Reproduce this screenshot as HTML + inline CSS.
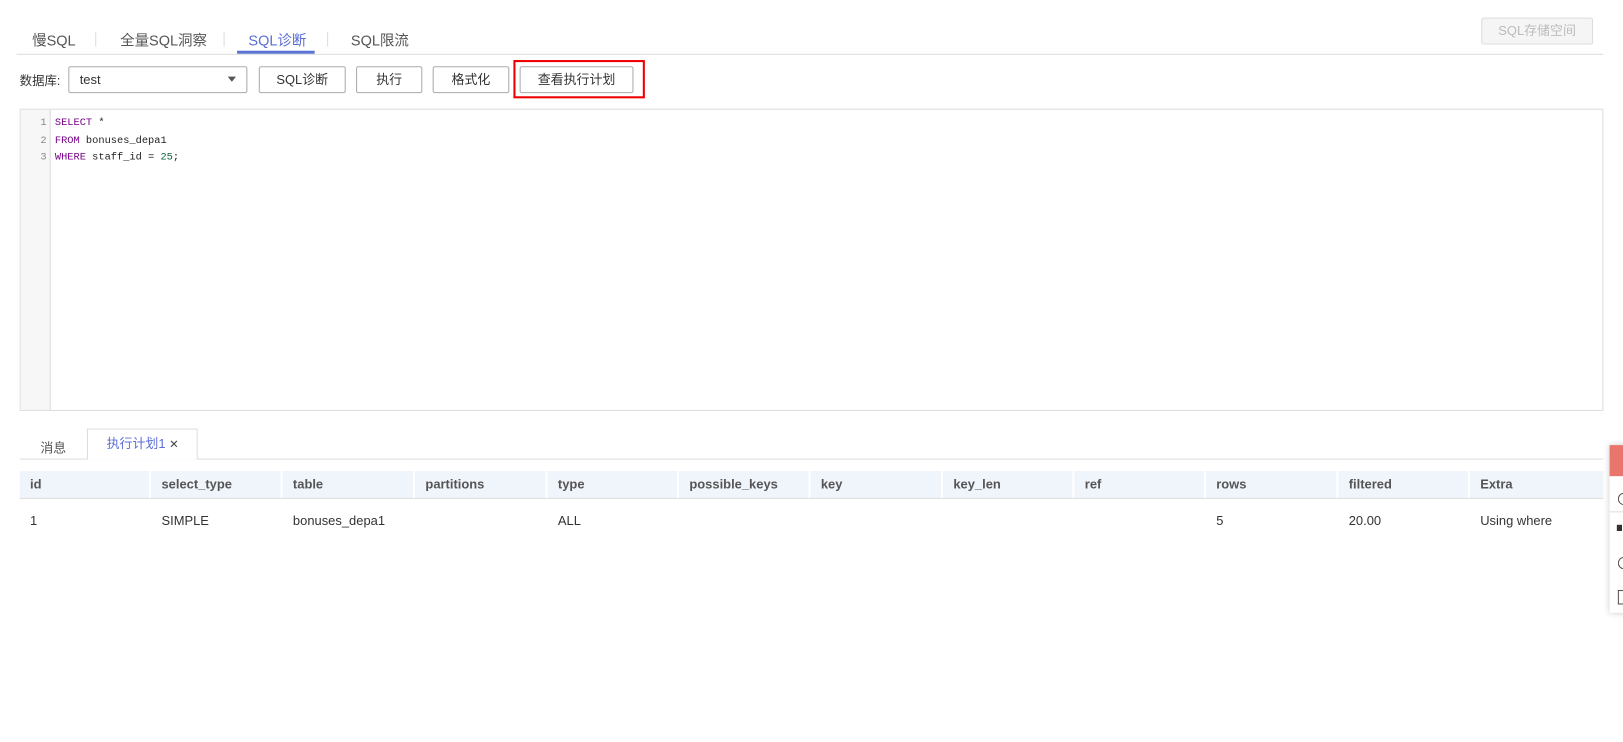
<!DOCTYPE html>
<html><head><meta charset="utf-8"><style>
*{box-sizing:border-box;margin:0;padding:0}
body{width:1623px;height:742px;background:#fff;font-family:"Liberation Sans","Noto Sans CJK SC",sans-serif;color:#333;position:relative;overflow:hidden;font-size:13px}
#w{position:absolute;left:0;top:0;width:1568px;height:717px;transform:scale(1.0351);transform-origin:0 0}
.abs{position:absolute}
.tab{position:absolute;top:29px;font-size:14px;color:#555}
.sep{position:absolute;top:31px;width:1px;height:14px;background:#ddd}
.btn{position:absolute;top:64px;height:26px;border:1px solid #aaa;border-radius:2px;background:#fff;font-size:12.5px;color:#333;text-align:center;line-height:24px}
.code{font-family:"Liberation Mono","DejaVu Sans Mono",monospace;font-size:10px;position:absolute;left:53px;line-height:16.5px;top:112px;color:#222}
.ln{position:absolute;left:20px;width:25px;text-align:right;font-family:"Liberation Mono",monospace;font-size:10px;color:#888;line-height:16.5px;top:112px}
.kw{color:#708}.num{color:#164}
.th{position:absolute;top:455px;height:26px;line-height:26px;font-weight:bold;color:#555;font-size:12.5px;padding-left:10px;background:#f0f4fb;border-right:2px solid #fff}
.td{position:absolute;top:496px;font-size:12.5px;color:#333}
</style></head><body><div id="w">
<div class="tab" style="left:31px">慢SQL</div>
<div class="sep" style="left:92px"></div>
<div class="tab" style="left:116px">全量SQL洞察</div>
<div class="sep" style="left:216px"></div>
<div class="tab" style="left:240px;color:#5b6fd6">SQL诊断</div>
<div class="abs" style="left:229px;top:49px;width:75px;height:3px;background:#5b74d4"></div>
<div class="sep" style="left:316px"></div>
<div class="tab" style="left:339px">SQL限流</div>
<div class="abs" style="left:16px;top:52px;width:1533px;height:1px;background:#ddd"></div>
<div class="abs" style="left:1431px;top:17px;width:108px;height:26px;border:1px solid #ddd;border-radius:2px;background:#f5f5f5;color:#bbb;text-align:center;line-height:24px;font-size:12.5px">SQL存储空间</div>

<div class="abs" style="left:19px;top:69px;font-size:12px">数据库:</div>
<div class="abs" style="left:66px;top:64px;width:173px;height:26px;border:1px solid #aaa;border-radius:2px;padding-left:10px;line-height:24px;font-size:12.5px">test<span style="position:absolute;right:10px;top:9px;width:0;height:0;border-left:4px solid transparent;border-right:4px solid transparent;border-top:5px solid #555"></span></div>
<div class="btn" style="left:250px;width:84px">SQL诊断</div>
<div class="btn" style="left:344px;width:64px">执行</div>
<div class="btn" style="left:418px;width:74px">格式化</div>
<div class="abs" style="left:496px;top:58px;width:127px;height:37px;border:2px solid #e00"></div>
<div class="btn" style="left:502px;width:110px">查看执行计划</div>

<div class="abs" style="left:19px;top:105px;width:1530px;height:292px;border:1px solid #ddd"></div>
<div class="abs" style="left:20px;top:106px;width:29px;height:290px;background:#f7f7f7;border-right:1px solid #ddd"></div>
<div class="ln">1<br>2<br>3</div>
<div class="code"><span class="kw">SELECT</span> *<br><span class="kw">FROM</span> bonuses_depa1<br><span class="kw">WHERE</span> staff_id = <span class="num">25</span>;</div>

<div class="abs" style="left:39px;top:422px;font-size:12.5px;color:#555">消息</div>
<div class="abs" style="left:19px;top:443px;width:1530px;height:1px;background:#ddd"></div>
<div class="abs" style="left:84px;top:414px;width:107px;height:30px;border:1px solid #ddd;border-bottom:none;background:#fff;padding-left:18px;line-height:29px;font-size:12.5px;color:#5b6fd6">执行计划1 <span style="color:#444;font-size:11px">✕</span></div>

<div class="th" style="left:19px;width:127px">id</div>
<div class="th" style="left:146px;width:127px">select_type</div>
<div class="th" style="left:273px;width:128px">table</div>
<div class="th" style="left:401px;width:128px">partitions</div>
<div class="th" style="left:529px;width:127px">type</div>
<div class="th" style="left:656px;width:127px">possible_keys</div>
<div class="th" style="left:783px;width:128px">key</div>
<div class="th" style="left:911px;width:127px">key_len</div>
<div class="th" style="left:1038px;width:127px">ref</div>
<div class="th" style="left:1165px;width:128px">rows</div>
<div class="th" style="left:1293px;width:127px">filtered</div>
<div class="th" style="left:1420px;width:129px;border-right:none">Extra</div>
<div class="abs" style="left:19px;top:481px;width:1530px;height:1px;background:#ddd"></div>
<div class="td" style="left:29px">1</div>
<div class="td" style="left:156px">SIMPLE</div>
<div class="td" style="left:283px">bonuses_depa1</div>
<div class="td" style="left:539px">ALL</div>
<div class="td" style="left:1175px">5</div>
<div class="td" style="left:1303px">20.00</div>
<div class="td" style="left:1430px">Using where</div>

<div class="abs" style="left:1555px;top:430px;width:70px;height:162px;background:#fff;box-shadow:0 0 6px rgba(0,0,0,.2)"></div>
<div class="abs" style="left:1555px;top:430px;width:70px;height:30px;background:#e8766d"></div>
<div class="abs" style="left:1555px;top:494px;width:70px;height:1px;background:#ddd"></div>
<div class="abs" style="left:1563px;top:476px;width:8px;height:12px;border:1px solid #555;border-radius:6px 0 0 6px;border-right:none"></div>
<div class="abs" style="left:1563px;top:538px;width:8px;height:12px;border:1px solid #555;border-radius:6px 0 0 6px;border-right:none"></div>
<div class="abs" style="left:1563px;top:570px;width:8px;height:14px;border:1px solid #555;border-right:none"></div>
<div class="abs" style="left:1562px;top:507px;width:5px;height:6px;background:#333"></div>
</div></body></html>
